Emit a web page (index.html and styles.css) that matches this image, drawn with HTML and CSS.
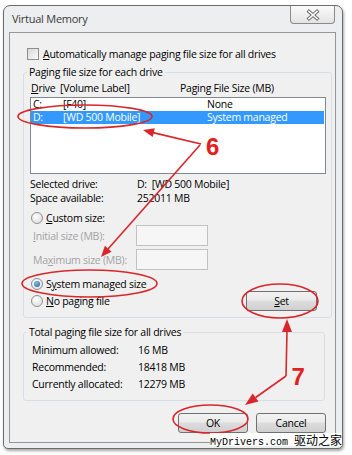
FILE: index.html
```html
<!DOCTYPE html>
<html lang="en">
<head>
    <meta charset="UTF-8">
    <title>Virtual Memory</title>
    <link rel="stylesheet" href="styles.css">
</head>
<body>

    <div class="window">
        <div class="titlebar">
            <span class="title">Virtual Memory</span>
            <div class="close">
                <svg width="14" height="12" viewBox="-7 -6 14 12">
                    <path d="M-4 -3.5 L4 3.5 M-4 3.5 L4 -3.5" stroke="#727272" stroke-width="3.6" stroke-linecap="square"/>
                    <path d="M-4 -3.5 L4 3.5 M-4 3.5 L4 -3.5" stroke="#fafafa" stroke-width="1.6" stroke-linecap="square"/>
                </svg>
            </div>
        </div>

        <div class="client">
            <div class="check-row">
                <span class="checkbox"></span>
                <span><u>A</u>utomatically manage paging file size for all drives</span>
            </div>

            <div class="group group-drives">
                <div class="group-title">Paging file size for each drive</div>
                <div class="list-head">
                    <span class="head-drive"><u>D</u>rive</span>
                    <span class="head-label">[Volume Label]</span>
                    <span>Paging File Size (MB)</span>
                </div>
                <div class="list">
                    <div class="list-row">
                        <span class="col-drive">C:</span>
                        <span class="col-label">[F40]</span>
                        <span>None</span>
                    </div>
                    <div class="list-row selected">
                        <span class="col-drive">D:</span>
                        <span class="col-label">[WD 500 Mobile]</span>
                        <span>System managed</span>
                    </div>
                </div>

                <div class="info">
                    <div class="info-row"><span class="info-key">Selected drive:</span><span>D:&nbsp; [WD 500 Mobile]</span></div>
                    <div class="info-row"><span class="info-key">Space available:</span><span>252011 MB</span></div>
                </div>

                <div class="radio-row row-custom">
                    <span class="radio"></span>
                    <span><u>C</u>ustom size:</span>
                </div>
                <div class="size-row row-initial">
                    <span class="size-key"><u>I</u>nitial size (MB):</span>
                    <span class="textbox"></span>
                </div>
                <div class="size-row row-max">
                    <span class="size-key">Ma<u>x</u>imum size (MB):</span>
                    <span class="textbox"></span>
                </div>
                <div class="radio-row row-system">
                    <span class="radio checked"></span>
                    <span>S<u>y</u>stem managed size</span>
                </div>
                <div class="last-row">
                    <div class="radio-row">
                        <span class="radio"></span>
                        <span><u>N</u>o paging file</span>
                    </div>
                    <div class="button btn-set"><u>S</u>et</div>
                </div>
            </div>

            <div class="group group-total">
                <div class="group-title">Total paging file size for all drives</div>
                <div class="stats">
                    <div class="stat-row"><span class="stat-key">Minimum allowed:</span><span>16 MB</span></div>
                    <div class="stat-row"><span class="stat-key">Recommended:</span><span>18418 MB</span></div>
                    <div class="stat-row"><span class="stat-key">Currently allocated:</span><span>12279 MB</span></div>
                </div>
            </div>

            <div class="buttons">
                <div class="button">OK</div>
                <div class="button">Cancel</div>
            </div>
        </div>
    </div>

    <!-- red hand-drawn notes laid over the dialog -->
    <svg class="marks" width="352" height="455" viewBox="0 0 352 455">
        <g fill="none" stroke="#d8262a" stroke-width="1.6">
            <ellipse cx="85" cy="116.5" rx="67" ry="11.5"/>
            <ellipse cx="89.5" cy="283.5" rx="67.5" ry="13.5"/>
            <ellipse cx="280" cy="301" rx="38" ry="17"/>
            <ellipse cx="210.5" cy="419" rx="37.5" ry="14"/>
            <path d="M201 144 L153 132.6"/>
            <path d="M200 145 L108 249"/>
            <path d="M286 376 L287 331"/>
            <path d="M286 376 L255.6 397.5"/>
        </g>
        <g fill="#d8262a">
            <polygon points="143,130 154.8,128.2 152.6,137"/>
            <polygon points="101,257 111.6,251.7 104.9,245.8"/>
            <polygon points="287,319 282,332 292,332"/>
            <polygon points="245,405 258.5,401.6 252.7,393.4"/>
        </g>
        <text class="note" x="212.5" y="155">6</text>
        <text class="note" x="298" y="385">7</text>
    </svg>

    <div class="watermark">MyDrivers.com <span class="cn">驱动之家</span></div>

</body>
</html>
```

FILE: styles.css
```css
body {
    margin: 0;
    width: 352px;
    height: 455px;
    overflow: hidden;
    position: relative;
    background: #fff;
    font-family: "Open Sans", "Noto Sans", sans-serif;
    font-size: 10.5px;
    letter-spacing: -0.25px;
    color: #000;
}
u {
    text-decoration-thickness: 1px;
    text-underline-offset: 1px;
}
.window {
    margin: 5px 0 0 3px;
    width: 340px;
    height: 444px;
    box-sizing: border-box;
    border: 1px solid #6b6b6b;
    border-radius: 7px 7px 5px 5px;
    background: #eceef0;
    padding: 0 6px 5px 5px;
    box-shadow: 1px 2px 3px rgba(0, 0, 0, 0.35);
}
.titlebar {
    height: 26px;
    display: flex;
    align-items: flex-start;
}
.title {
    margin: 6px 0 0 3px;
    font-size: 11px;
    line-height: 14px;
    color: #3a3a3a;
}
.close {
    margin: 0 1px 0 auto;
    width: 45px;
    height: 18px;
    box-sizing: border-box;
    border: 1px solid #8a8a8a;
    border-top: none;
    border-radius: 0 0 4px 4px;
    background: linear-gradient(#fbfbfb, #e3e3e3);
    display: flex;
    align-items: center;
    justify-content: center;
}
.client {
    height: 411px;
    box-sizing: border-box;
    border: 1px solid #979797;
    background: #f0f0f0;
    padding: 14px 3px 0 13px;
}
.check-row {
    display: flex;
    align-items: center;
    height: 13px;
    margin-left: 4px;
}
.checkbox {
    width: 12px;
    height: 12px;
    box-sizing: border-box;
    border: 1px solid #8f8f8f;
    background: linear-gradient(135deg, #d8d8d8, #fbfbfb);
    margin-right: 4px;
}
.group {
    border: 1px solid #d5dfe5;
    border-radius: 3px;
    padding: 0 5px 6px 6px;
}
.group-drives {
    margin-top: 12px;
}
.group-total {
    margin: 14px 7px 0 0;
    padding-bottom: 7px;
}
.group-title {
    width: fit-content;
    margin: -7px 0 0 -3px;
    padding: 0 2px;
    line-height: 13px;
    background: #f0f0f0;
}
.list-head {
    display: flex;
    height: 13px;
    line-height: 13px;
    margin-top: 3px;
    padding-left: 1px;
}
.head-drive {
    width: 29px;
}
.head-label {
    width: 120px;
}
.list {
    margin-top: 2px;
    width: 296px;
    height: 77px;
    box-sizing: border-box;
    border: 1px solid #828790;
    background: #fff;
    padding-right: 1px;
}
.list-row {
    display: flex;
    height: 13px;
    line-height: 13px;
    padding-left: 2px;
}
.list-row.selected {
    background: #3399ff;
    color: #fff;
}
.col-drive {
    width: 30px;
}
.col-label {
    width: 144px;
}
.info {
    margin-top: 3px;
}
.info-row {
    display: flex;
    height: 14px;
    line-height: 14px;
}
.info-key {
    width: 107px;
}
.radio-row {
    display: flex;
    align-items: center;
    height: 13px;
    padding-left: 1px;
}
.radio {
    flex-shrink: 0;
    width: 12px;
    height: 12px;
    box-sizing: border-box;
    border: 1px solid #8e8f8f;
    border-radius: 50%;
    background: radial-gradient(circle at 40% 35%, #fdfdfd, #d9d9d9);
    margin-right: 3px;
    display: flex;
    align-items: center;
    justify-content: center;
}
.radio.checked::after {
    content: "";
    width: 6px;
    height: 6px;
    border-radius: 50%;
    background: radial-gradient(circle at 40% 35%, #7fc0ec, #1d5a8c);
}
.row-custom {
    margin-top: 6px;
}
.size-row {
    display: flex;
    align-items: center;
    height: 21px;
    padding-left: 3px;
    color: #a3a3a3;
}
.row-initial {
    margin-top: 1px;
}
.row-max {
    margin-top: 3px;
}
.size-key {
    flex-shrink: 0;
    width: 103px;
    white-space: nowrap;
}
.textbox {
    width: 72px;
    height: 21px;
    box-sizing: border-box;
    border: 1px solid #c2c2c2;
    background: #f6f6f6;
}
.row-system {
    margin-top: 7px;
}
.last-row {
    display: flex;
    align-items: center;
    height: 20px;
    margin-top: 1px;
}
.button {
    width: 70px;
    height: 20px;
    box-sizing: border-box;
    border: 1px solid #707070;
    border-radius: 3px;
    background: linear-gradient(#f2f2f2 0%, #ebebeb 45%, #dddddd 50%, #cfcfcf 100%);
    display: flex;
    align-items: center;
    justify-content: center;
    color: #000;
}
.btn-set {
    width: 71px;
    margin: 0 9px 0 auto;
}
.stats {
    margin-top: 3px;
}
.stat-row {
    display: flex;
    height: 17px;
    line-height: 17px;
    padding-left: 2px;
}
.stat-key {
    width: 106px;
}
.buttons {
    display: flex;
    justify-content: flex-end;
    gap: 8px;
    margin-top: 12px;
    padding-right: 6px;
}
.marks {
    position: absolute;
    top: 0;
    left: 0;
}
.note {
    font-family: "Liberation Sans", Arial, sans-serif;
    font-weight: bold;
    font-size: 24px;
    fill: #e3201c;
    text-anchor: middle;
}
.watermark {
    position: absolute;
    left: 210px;
    top: 433px;
    width: 132px;
    height: 13px;
    background: #fff;
    font-family: "Liberation Mono", monospace;
    font-size: 10px;
    letter-spacing: 0;
    line-height: 13px;
    color: #000;
    white-space: nowrap;
}
.watermark .cn {
    font-family: "Noto Sans CJK SC", sans-serif;
    font-size: 12px;
}
```
